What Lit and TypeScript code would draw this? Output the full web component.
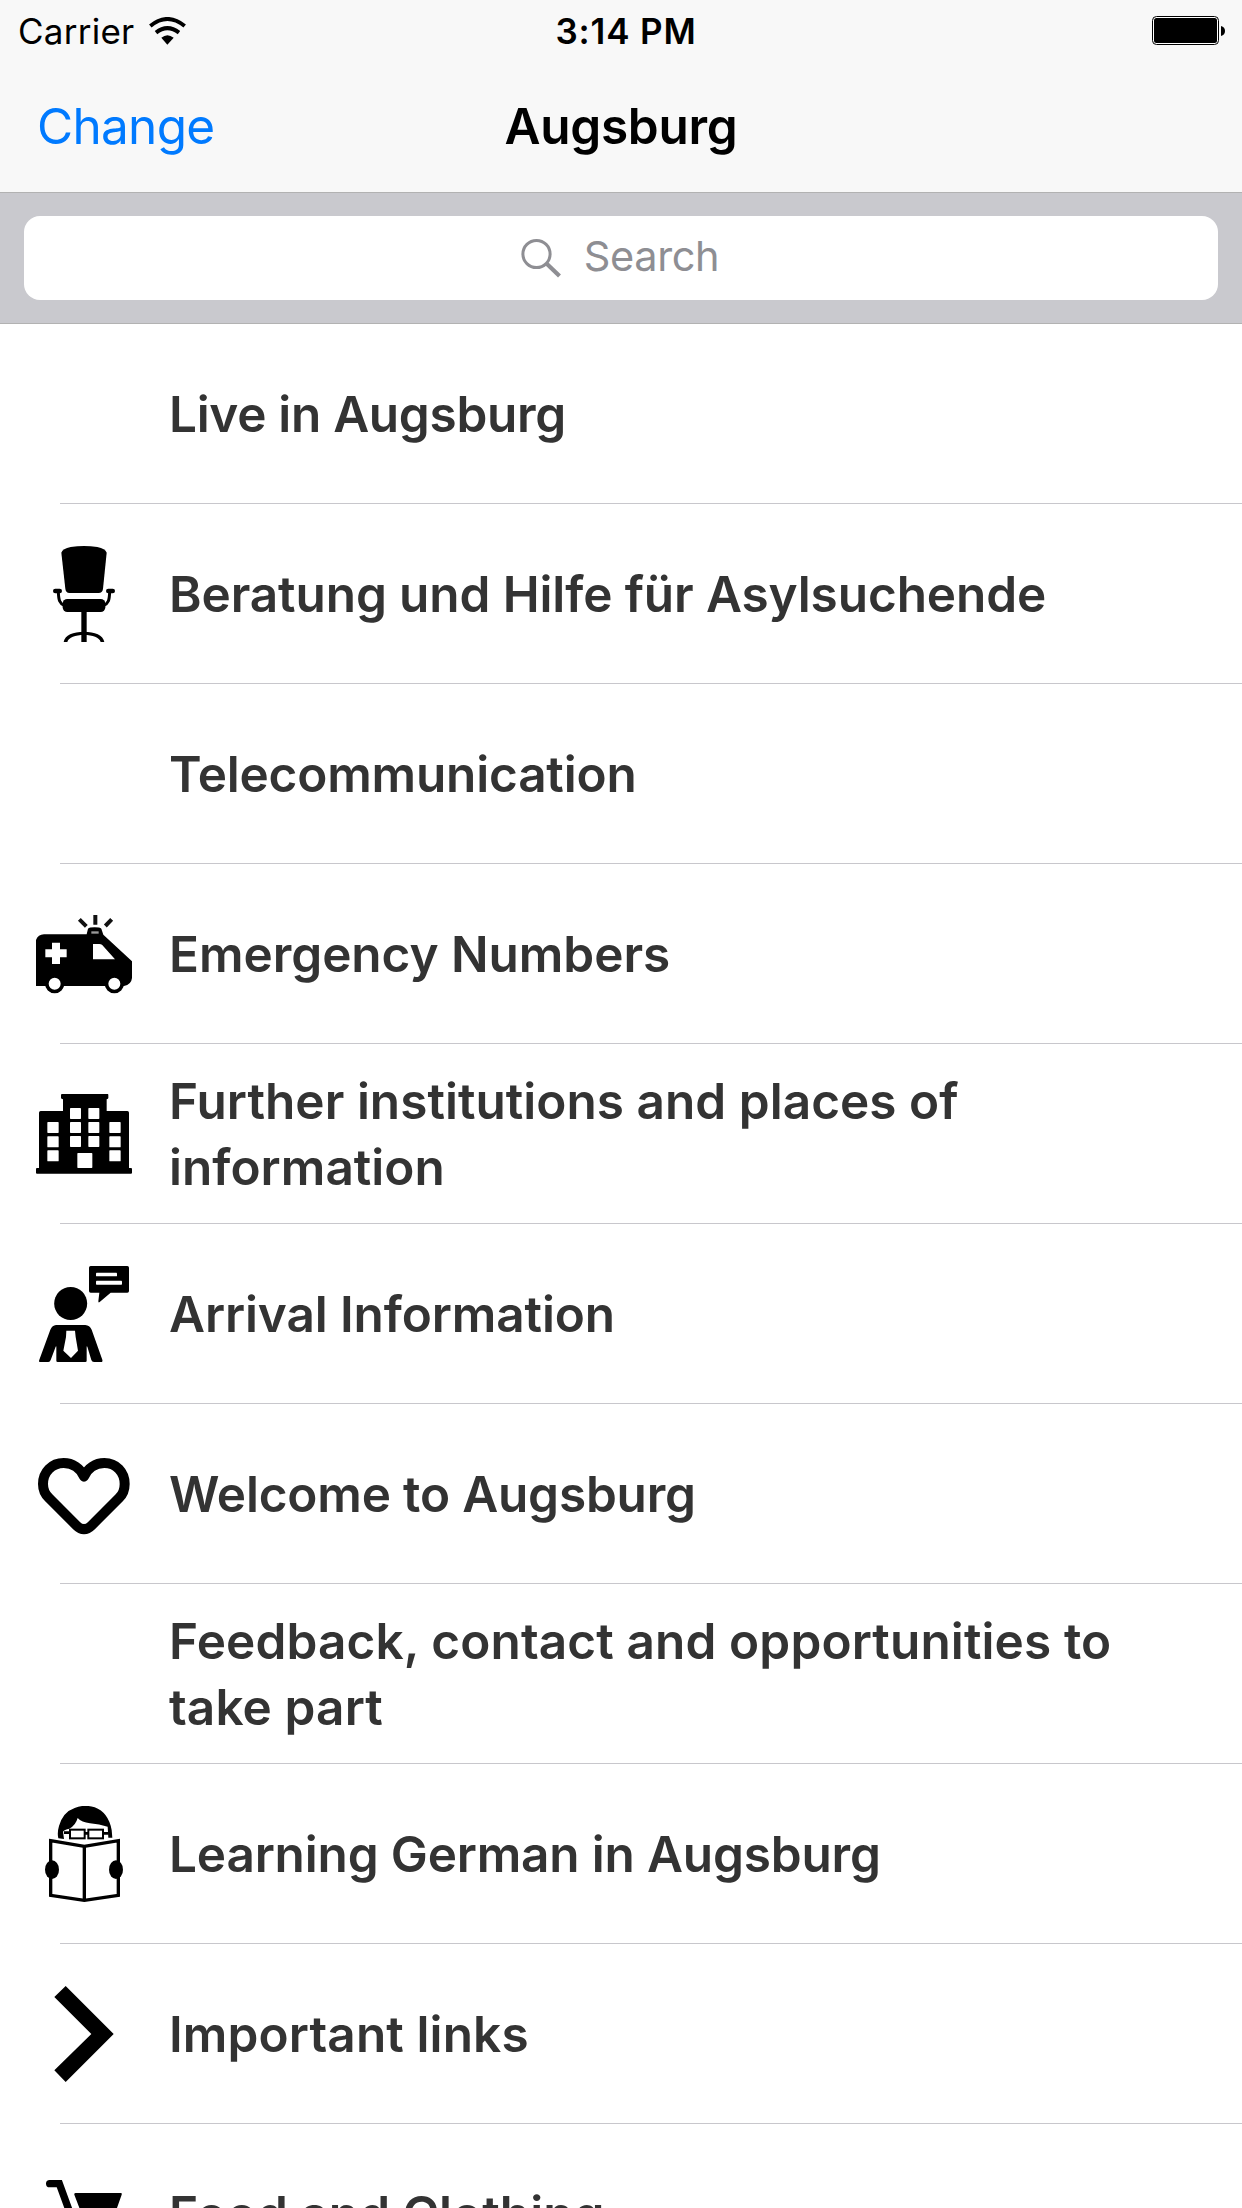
import { LitElement, html, svg, css, nothing } from "lit";
import { customElement, property } from "lit/decorators.js";
import { styleMap } from "lit/directives/style-map.js";

const icons: Record<string, unknown> = {
  chair: svg`
    <path d="M124 98Q128 86 152 81Q192 75 232 81Q256 86 260 98L249 206Q247 219 236 219H148Q138 219 136 206Z"/>
    <rect x="128" y="237" width="128" height="39" rx="14"/>
    <rect x="99" y="206" width="27" height="14" rx="7"/>
    <rect x="258" y="206" width="27" height="14" rx="7"/>
    <path d="M115 216C116 240 118 250 134 257M269 216C268 240 266 250 250 257" fill="none" stroke="#000" stroke-width="9"/>
    <rect x="184" y="270" width="16" height="96"/>
    <path d="M131 366C134 345 160 335 192 335S250 345 253 366H242C238 352 218 345 192 345S146 352 142 366Z"/>`,
  ambulance: svg`
    <path fill-rule="evenodd" d="M48 150Q54 134 72 133H200L204 116Q208 112 224 112T244 116L250 134L336 214V264Q334 284 312 288H306A27 27 0 0 1 260 288H130A27 27 0 0 1 78 288H48ZM96 158V178H76V202H96V222H120V202H140V178H120V158ZM219 162V208H285L246 164Q243 162 238 162Z"/>
    <circle cx="104" cy="281" r="23.500" fill="#fff" stroke="#000" stroke-width="11"/>
    <circle cx="283" cy="281" r="23.500" fill="#fff" stroke="#000" stroke-width="11"/>
    <rect x="214" y="124" width="22" height="7" fill="#999"/>
    <path d="M226 75V104M178 88L199 109M275 88L256 108" fill="none" stroke="#111" stroke-width="12"/>`,
  building: svg`
    <path fill-rule="evenodd" d="M126 72H263Q265 72 265 75V84Q265 87 260 88V123H322Q327 123 327 128V294H333Q336 294 336 297V308Q336 311 333 311H51Q48 311 48 308V297Q48 294 51 294H57V128Q57 123 62 123H129V88Q123 87 123 84V75Q123 72 126 72Z"/>
    <g fill="#fff">
      <rect x="150" y="114" width="33" height="33" rx="2"/><rect x="205" y="114" width="33" height="33" rx="2"/>
      <rect x="150" y="156" width="33" height="33" rx="2"/><rect x="205" y="156" width="33" height="33" rx="2"/>
      <rect x="150" y="198" width="33" height="33" rx="2"/><rect x="205" y="198" width="33" height="33" rx="2"/>
      <rect x="82" y="156" width="34" height="33" rx="2"/><rect x="268" y="156" width="34" height="33" rx="2"/>
      <rect x="82" y="199" width="34" height="33" rx="2"/><rect x="268" y="199" width="34" height="33" rx="2"/>
      <rect x="82" y="241" width="34" height="33" rx="2"/><rect x="268" y="241" width="34" height="33" rx="2"/>
      <rect x="172" y="249" width="45" height="45" rx="2"/>
    </g>`,
  arrival: svg`
    <circle cx="152" cy="190.500" r="49.500"/>
    <path d="M108 255H196Q209 256 215 269L247 359Q249 366 243 366H222Q216 366 214 360L202 320Q200 316 200 322V362Q200 366 196 366H113Q109 366 109 362V322Q109 316 107 320L92 360Q90 366 85 366H61Q55 366 58 359L91 269Q97 256 108 255Z"/>
    <path fill="#fff" d="M139 272H165L167 291L174 332L153 354L130 332L138 291Z"/>
    <path d="M212 78H322Q327 78 327 83V153Q327 158 322 158H272L239 186Q235 189 235 184L238 158H212Q207 158 207 153V83Q207 78 212 78Z"/>
    <rect x="228" y="98" width="63" height="11" rx="2" fill="#fff"/>
    <rect x="228" y="122" width="78" height="12" rx="2" fill="#fff"/>`,
  heart: svg`
    <path fill="none" stroke="#000" stroke-width="30" stroke-linejoin="round" d="M192 140C181 114 157 99 131 99C96 99 69 126 69 162C69 180 76 194 87 204L170 287C184 301 200 301 214 287L297 204C308 194 314 180 314 162C314 126 288 99 253 99C227 99 203 114 192 140Z"/>`,
  reader: svg`
    <path d="M115 175Q111 158 117 138Q129 96 164 84Q192 72 224 82Q265 97 275 150L277 173H265L263 140Q238 132 210 130Q185 127 173 114Q167 136 148 146Q133 149 129 155L132 177Z"/>
    <g fill="none" stroke="#000">
      <rect x="150" y="149" width="44" height="26" stroke-width="6"/>
      <rect x="205" y="149" width="44" height="26" stroke-width="6"/>
      <path d="M132 158H150M249 160H266M194 160H205" stroke-width="8"/>
      <path d="M92 182L193 199L295 182V346L193 361L92 346ZM193 199V361" stroke-width="10"/>
    </g>
    <ellipse cx="96" cy="269" rx="21" ry="28"/>
    <ellipse cx="288" cy="269" rx="21" ry="28"/>`,
  chevron: svg`<path d="M137 78L281 222L137 366L103 331L214 222L103 111Z"/>`,
  cart: svg`
    <path d="M89 671H118L157 778Q162 795 180 795H290" fill="none" stroke="#000" stroke-width="22" stroke-linecap="round"/>
    <path d="M167 699H302Q307 699 305 704L280 775H190L163 704Q162 699 167 699Z"/>
    <circle cx="190" cy="850" r="22"/><circle cx="275" cy="850" r="22"/>`,
};

/* Each glyph is drawn on a 288-unit square; the number is the top of that square. */
const tops: Record<string, number> = {
  chair: 78, ambulance: 48, building: 48, arrival: 78,
  heart: 48, reader: 78, chevron: 78, cart: 618,
};

interface Category {
  icon: string;
  label: string;
  tracking: number;
}

@customElement("category-row")
class CategoryRow extends LitElement {
  @property() icon = "";
  @property() label = "";
  @property({ type: Number }) tracking = 0;

  static styles = css`
    :host {
      display: flex;
      align-items: center;
      box-sizing: border-box;
      height: 180px;
      flex: none;
      padding: 0 60px 0 36px;
      background: linear-gradient(#c8c7cc, #c8c7cc) no-repeat 60px 100% / 100% 1px;
    }
    .icon { width: 96px; height: 96px; margin-right: 37px; flex: none; }
    .icon svg { display: block; width: 96px; height: 96px; }
    .icon .ambulance { filter: blur(0.7px); }
    .icon .reader { filter: blur(0.4px); }
    .label { font-size: 49.5px; font-weight: 600; line-height: 66px; color: #333; }
  `;

  render() {
    return html`
      <div class="icon">
        ${this.icon
          ? html`<svg class=${this.icon} viewBox="48 ${tops[this.icon]} 288 288">${icons[this.icon]}</svg>`
          : nothing}
      </div>
      <div class="label" style=${styleMap({ letterSpacing: `${this.tracking}px` })}>${this.label}</div>
    `;
  }
}

@customElement("app-root")
class AppRoot extends LitElement {
  static styles = css`
    :host {
      display: flex;
      flex-direction: column;
      width: 1242px;
      height: 2208px;
      overflow: hidden;
      background: #fff;
      font-family: Inter, "Liberation Sans", sans-serif;
      color: #000;
    }
    .top { height: 193px; box-sizing: border-box; flex: none; background: #f8f8f8; border-bottom: 1px solid #b2b2b2; }
    .status, .nav { display: grid; grid-template-columns: 1fr auto 1fr; align-items: center; white-space: nowrap; }
    .status { height: 60px; padding: 0 17px 0 18px; font-size: 35px; }
    .carrier { display: flex; align-items: center; gap: 15px; line-height: 62px; letter-spacing: 0.25px; }
    .time { padding-left: 9px; font-weight: 600; line-height: 62px; letter-spacing: 0.85px; }
    .battery { justify-self: end; }
    .nav { height: 132px; padding: 0 36px; font-size: 49.5px; line-height: 132px; }
    .back { padding-left: 1px; color: #007aff; letter-spacing: -0.7px; }
    .title { font-weight: 600; letter-spacing: -0.3px; }
    .searchbar { height: 131px; box-sizing: border-box; flex: none; padding: 23px 24px; background: #c9c9ce; border-bottom: 1px solid #b2b2b2; }
    .field { height: 84px; box-sizing: border-box; padding-right: 2px; display: flex; align-items: center; justify-content: center; gap: 23px; border-radius: 16px; background: #fff; color: #8e8e93; font-size: 41.5px; line-height: 81px; }
    .placeholder { height: 84px; letter-spacing: -0.4px; }
    svg { display: block; flex: none; }
  `;

  private rows: Category[] = [
    { icon: "", label: "Live in Augsburg", tracking: -0.3 },
    { icon: "chair", label: "Beratung und Hilfe für Asylsuchende", tracking: -0.1 },
    { icon: "", label: "Telecommunication", tracking: -0.18 },
    { icon: "ambulance", label: "Emergency Numbers", tracking: -0.04 },
    { icon: "building", label: "Further institutions and places of information", tracking: 0.04 },
    { icon: "arrival", label: "Arrival Information", tracking: -0.1 },
    { icon: "heart", label: "Welcome to Augsburg", tracking: -0.18 },
    { icon: "", label: "Feedback, contact and opportunities to take part", tracking: 0.13 },
    { icon: "reader", label: "Learning German in Augsburg", tracking: -0.17 },
    { icon: "chevron", label: "Important links", tracking: 0.13 },
    { icon: "cart", label: "Food and Clothing", tracking: 0.04 },
  ];

  render() {
    return html`
      <div class="top">
        <div class="status">
          <div class="carrier">
            <span class="name">Carrier</span>
            <svg width="37" height="28" viewBox="450 47 111 84">
              <path d="M454 74Q505 32 557 74M471 94Q505 67 540 94" fill="none" stroke="#000" stroke-width="12"/>
              <path d="M487 109Q505 94 524 109L505 130Z"/>
            </svg>
          </div>
          <div class="time">3:14 PM</div>
          <svg class="battery" width="73" height="30" viewBox="0 0 73 30">
            <rect x="0.500" y="0.500" width="66" height="28" rx="4" fill="#fff" stroke="#000"/>
            <rect x="2" y="2" width="63" height="25" rx="2.500"/>
            <path d="M69 10Q73 11 73 15T69 20Z"/>
          </svg>
        </div>
        <div class="nav">
          <div class="back">Change</div>
          <div class="title">Augsburg</div>
        </div>
      </div>
      <div class="searchbar">
        <div class="field">
          <svg width="40" height="40" viewBox="0 0 40 40" fill="none" stroke="#8e8e93">
            <circle cx="15.500" cy="16" r="13.600" stroke-width="3"/>
            <path d="M26 26L38.500 38" stroke-width="4.200"/>
          </svg>
          <span class="placeholder">Search</span>
        </div>
      </div>
      ${this.rows.map(
        (row) => html`<category-row .icon=${row.icon} .label=${row.label} .tracking=${row.tracking}></category-row>`
      )}
    `;
  }
}
